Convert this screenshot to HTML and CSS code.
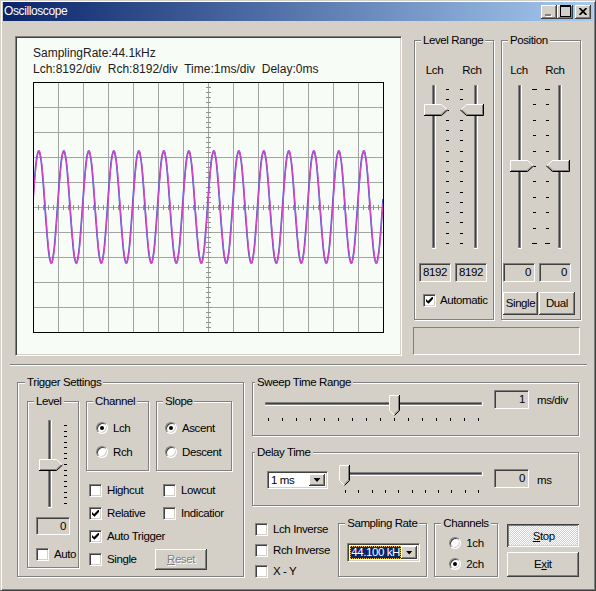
FILE: index.html
```html
<!DOCTYPE html>
<html>
  <head>
    <title>Oscilloscope</title>
    <link rel="stylesheet" href="styles.css">
  </head>
  <body>
    <svg class="defs" width="0" height="0">
      <defs>
        <g id="thumb-r">
          <polygon points="0,0 18,0 24,6 18,12 0,12" fill="#d4d0c8"/>
          <polyline points="0.5,12 0.5,0.5 17.5,0.5 23,5.5" stroke="#fff" fill="none"/>
          <polyline points="0,11.5 17.5,11.5 23.5,6" stroke="#000" fill="none"/>
          <polyline points="1,10.5 17,10.5 22,6" stroke="#808080" fill="none"/>
        </g>
        <g id="thumb-l">
          <polygon points="0,6 6,0 24,0 24,12 6,12" fill="#d4d0c8"/>
          <polyline points="0.5,6 6.5,0.5 23,0.5" stroke="#fff" fill="none"/>
          <polyline points="0.5,6 6.5,11.5 23.5,11.5 23.5,0" stroke="#000" fill="none"/>
          <polyline points="2,6 7,10.5 22.5,10.5 22.5,1" stroke="#808080" fill="none"/>
        </g>
        <g id="thumb-d">
          <polygon points="0,0 11,0 11,15 5.5,21 0,15" fill="#d4d0c8"/>
          <polyline points="5.5,20.5 0.5,15.5 0.5,0.5 10,0.5" stroke="#fff" fill="none"/>
          <polyline points="10.5,0 10.5,15.5 5.5,20.5" stroke="#000" fill="none"/>
          <polyline points="9.5,1 9.5,15 5.5,19" stroke="#808080" fill="none"/>
        </g>
        <pattern id="grid" width="25" height="25" patternUnits="userSpaceOnUse">
          <path d="M0 0.5H25M0.5 0V25" stroke="#a4a4a4" fill="none"/>
        </pattern>
        <pattern id="hticks" width="5" height="5" patternUnits="userSpaceOnUse">
          <rect width="5" height="1" fill="#909090"/>
        </pattern>
        <pattern id="vticks" width="5" height="5" patternUnits="userSpaceOnUse">
          <rect width="1" height="5" fill="#909090"/>
        </pattern>
        <clipPath id="plot-clip">
          <rect x="1" y="1" width="349" height="249"/>
        </clipPath>
      </defs>
    </svg>

    <div class="window">
      <div class="titlebar">
        <span class="title">Oscilloscope</span>
        <span class="tb-btn tb-min"></span>
        <span class="tb-btn tb-max"></span>
        <span class="tb-btn tb-close">
          <svg width="8" height="7" viewBox="0 0 8 7"><path d="M0.5 0L7.5 7M7.5 0L0.5 7" stroke="#000" stroke-width="1.7"/></svg>
        </span>
      </div>

      <div class="client">
        <div class="top">
          <div class="scope">
            <div class="scope-text">SamplingRate:44.1kHz</div>
            <div class="scope-text">Lch:8192/div&nbsp; Rch:8192/div&nbsp; Time:1ms/div&nbsp; Delay:0ms</div>
            <svg class="plot" width="351" height="251" viewBox="0 0 351 251">
              <rect x="0" y="0" width="351" height="251" fill="#f8fcf6"/>
              <rect x="0" y="0" width="351" height="251" fill="url(#grid)"/>
              <rect x="173" y="0" width="5" height="251" fill="url(#hticks)"/>
              <rect x="0" y="123" width="351" height="5" fill="url(#vticks)"/>
              <g clip-path="url(#plot-clip)">
                <polyline id="lch" fill="none" stroke="#4a56d6" stroke-width="1.6"/>
                <polyline id="rch" fill="none" stroke="#e044c4" stroke-width="1.2"/>
              </g>
              <rect x="0.5" y="0.5" width="350" height="250" fill="none" stroke="#000"/>
            </svg>
          </div>

          <div class="side">
            <div class="groups">
              <div class="group lr">
                <span class="legend">Level Range</span>
                <div class="ch-labels"><span>Lch</span><span>Rch</span></div>
                <svg class="vslider" width="78" height="170" viewBox="0 0 78 170">
                  <rect x="17" y="3" width="4" height="164" fill="#fff"/>
                  <rect x="17" y="3" width="3" height="163" fill="#808080"/>
                  <rect x="18" y="4" width="1" height="161" fill="#404040"/>
                  <rect x="59" y="3" width="4" height="164" fill="#fff"/>
                  <rect x="59" y="3" width="3" height="163" fill="#808080"/>
                  <rect x="60" y="4" width="1" height="161" fill="#404040"/>
                  <path class="tick" d="M31 7.5h3M31 17.5h3M31 28.5h3M31 38.5h3M31 48.5h3M31 58.5h3M31 69.5h3M31 79.5h3M31 89.5h3M31 99.5h3M31 110.5h3M31 120.5h3M31 130.5h3M31 140.5h3M31 151.5h3M31 161.5h3"/>
                  <path class="tick" d="M45 7.5h3M45 17.5h3M45 28.5h3M45 38.5h3M45 48.5h3M45 58.5h3M45 69.5h3M45 79.5h3M45 89.5h3M45 99.5h3M45 110.5h3M45 120.5h3M45 130.5h3M45 140.5h3M45 151.5h3M45 161.5h3"/>
                  <use href="#thumb-r" x="9" y="22"/>
                  <use href="#thumb-l" x="45" y="22"/>
                </svg>
                <div class="edits">
                  <span class="edit">8192</span>
                  <span class="edit">8192</span>
                </div>
                <div class="check lr-auto"><span class="box on"></span>Automatic</div>
              </div>

              <div class="group pos">
                <span class="legend">Position</span>
                <div class="ch-labels"><span>Lch</span><span>Rch</span></div>
                <svg class="vslider" width="78" height="170" viewBox="0 0 78 170">
                  <rect x="16" y="3" width="4" height="164" fill="#fff"/>
                  <rect x="16" y="3" width="3" height="163" fill="#808080"/>
                  <rect x="17" y="4" width="1" height="161" fill="#404040"/>
                  <rect x="56" y="3" width="4" height="164" fill="#fff"/>
                  <rect x="56" y="3" width="3" height="163" fill="#808080"/>
                  <rect x="57" y="4" width="1" height="161" fill="#404040"/>
                  <path class="tick" d="M30 7.5h5M31 22.5h3M31 38.5h3M31 53.5h3M31 69.5h3M31 84.5h3M31 99.5h3M31 115.5h3M31 130.5h3M31 146.5h3M30 161.5h5"/>
                  <path class="tick" d="M43 7.5h5M44 22.5h3M44 38.5h3M44 53.5h3M44 69.5h3M44 84.5h3M44 99.5h3M44 115.5h3M44 130.5h3M44 146.5h3M43 161.5h5"/>
                  <use href="#thumb-r" x="8" y="78"/>
                  <use href="#thumb-l" x="44" y="78"/>
                </svg>
                <div class="edits">
                  <span class="edit">0</span>
                  <span class="edit">0</span>
                </div>
                <div class="pos-btns">
                  <span class="btn btn-single">Single</span>
                  <span class="btn btn-dual">Dual</span>
                </div>
              </div>
            </div>
            <div class="status"></div>
          </div>
        </div>

        <div class="sep"></div>

        <div class="bottom">
          <div class="group trigger">
            <span class="legend legend-trig">Trigger Settings</span>

            <div class="group level-box">
              <span class="legend">Level</span>
              <svg class="vslider" width="50" height="100" viewBox="0 0 50 100">
                <rect x="20" y="8" width="4" height="88" fill="#fff"/>
                <rect x="20" y="8" width="3" height="87" fill="#808080"/>
                <rect x="21" y="9" width="1" height="85" fill="#404040"/>
                <path class="tick" d="M36 13.5h3M36 19.5h3M36 24.5h3M36 30.5h3M36 35.5h3M36 41.5h3M36 46.5h3M36 52.5h3M36 58.5h3M36 63.5h3M36 69.5h3M36 74.5h3M36 80.5h3M36 85.5h3M36 91.5h3"/>
                <use href="#thumb-r" x="11" y="47"/>
              </svg>
              <span class="edit level-edit">0</span>
              <div class="check level-auto"><span class="box"></span>Auto</div>
            </div>

            <div class="trig-main">
              <div class="trig-groups">
                <div class="group chan-box">
                  <span class="legend">Channel</span>
                  <div class="opts">
                    <div class="opt"><span class="radio on"></span>Lch</div>
                    <div class="opt"><span class="radio"></span>Rch</div>
                  </div>
                </div>
                <div class="group slope-box">
                  <span class="legend">Slope</span>
                  <div class="opts">
                    <div class="opt"><span class="radio on"></span>Ascent</div>
                    <div class="opt"><span class="radio"></span>Descent</div>
                  </div>
                </div>
              </div>

              <div class="trig-checks">
                <div class="row">
                  <div class="check col1"><span class="box"></span>Highcut</div>
                  <div class="check"><span class="box"></span>Lowcut</div>
                </div>
                <div class="row">
                  <div class="check col1"><span class="box on"></span>Relative</div>
                  <div class="check"><span class="box"></span>Indicatior</div>
                </div>
                <div class="row">
                  <div class="check"><span class="box on"></span>Auto Trigger</div>
                </div>
                <div class="row">
                  <div class="check col1 short"><span class="box"></span>Single</div>
                  <span class="btn btn-reset disabled"><u>R</u>eset</span>
                </div>
              </div>
            </div>
          </div>

          <div class="bright">
            <div class="group sweep">
              <span class="legend legend-near">Sweep Time Range</span>
              <svg class="hslider sweep-slider" width="224" height="32" viewBox="0 0 224 32">
                <rect x="3" y="10" width="218" height="4" fill="#fff"/>
                <rect x="3" y="10" width="217" height="3" fill="#808080"/>
                <rect x="4" y="11" width="215" height="1" fill="#404040"/>
                <path class="tick" d="M6.5 26v3M20.5 26v3M34.5 26v3M48.5 26v3M62.5 26v3M76.5 26v3M90.5 26v3M104.5 26v3M118.5 26v3M132.5 26v3M146.5 26v3M160.5 26v3M174.5 26v3M188.5 26v3M202.5 26v3M216.5 26v3"/>
                <use href="#thumb-d" x="127" y="3"/>
              </svg>
              <span class="edit sweep-edit">1</span>
              <span class="unit sweep-unit">ms/div</span>
            </div>

            <div class="group delay">
              <span class="legend legend-near">Delay Time</span>
              <div class="combo delay-combo">
                <span class="combo-text">1 ms</span>
                <span class="combo-btn"></span>
              </div>
              <svg class="hslider delay-slider" width="149" height="32" viewBox="0 0 149 32">
                <rect x="5" y="9" width="141" height="4" fill="#fff"/>
                <rect x="5" y="9" width="140" height="3" fill="#808080"/>
                <rect x="6" y="10" width="138" height="1" fill="#404040"/>
                <path class="tick" d="M8.5 27v3M21.5 27v3M35.5 27v3M48.5 27v3M61.5 27v3M75.5 27v3M88.5 27v3M101.5 27v3M114.5 27v3M128.5 27v3M141.5 27v3"/>
                <use href="#thumb-d" x="2" y="2"/>
              </svg>
              <span class="edit delay-edit">0</span>
              <span class="unit delay-unit">ms</span>
            </div>

            <div class="brow">
              <div class="checks">
                <div class="check"><span class="box"></span>Lch Inverse</div>
                <div class="check"><span class="box"></span>Rch Inverse</div>
                <div class="check"><span class="box"></span>X - Y</div>
              </div>

              <div class="group samp">
                <span class="legend">Sampling Rate</span>
                <div class="combo samp-combo">
                  <span class="combo-text sel">44.100 kH</span>
                  <span class="combo-btn"></span>
                </div>
              </div>

              <div class="group chans">
                <span class="legend">Channels</span>
                <div class="opts chans-opts">
                  <div class="opt"><span class="radio"></span>1ch</div>
                  <div class="opt"><span class="radio on"></span>2ch</div>
                </div>
              </div>

              <div class="btns">
                <span class="btn btn-stop pushed"><u>S</u>top</span>
                <span class="btn btn-exit">E<u>x</u>it</span>
              </div>
            </div>
          </div>
        </div>
      </div>
    </div>

    <script src="wave.js"></script>
  </body>
</html>
```

FILE: styles.css
```css
* {
  box-sizing: border-box;
}

body {
  margin: 0;
  font-family: "Liberation Sans", Arial, sans-serif;
  font-size: 11.5px;
  letter-spacing: -0.4px;
  line-height: 15px;
  color: #000;
  background: #d4d0c8;
}

.defs {
  position: absolute;
  width: 0;
  height: 0;
}

/* window frame */

.window {
  width: 596px;
  height: 591px;
  background: #d4d0c8;
  border: 1px solid;
  border-color: #d4d0c8 #404040 #404040 #d4d0c8;
  box-shadow: inset 1px 1px #fff, inset -1px -1px #808080;
  padding: 1px 2px 2px 2px;
}

.titlebar {
  height: 19px;
  display: flex;
  align-items: center;
  padding: 0 2px 0 1px;
  background: linear-gradient(to right, #0a246a, #a6caf0);
  color: #fff;
}

.title {
  flex: 1;
  font-size: 12px;
}

.tb-btn {
  width: 16px;
  height: 14px;
  display: flex;
  align-items: center;
  justify-content: center;
  background: #d4d0c8;
  box-shadow: inset -1px -1px #404040, inset 1px 1px #fff, inset -2px -2px #808080, inset 2px 2px #d4d0c8;
}

.tb-min::after {
  content: '';
  width: 6px;
  height: 2px;
  margin: 6px 2px 0 0;
  background: #808080;
  box-shadow: 1px 1px #fff;
}

.tb-max::after {
  content: '';
  width: 9px;
  height: 9px;
  margin-bottom: 1px;
  border: 1px solid #000;
  border-top-width: 2px;
}

.tb-close {
  margin-left: 2px;
}

.tb-close svg {
  margin-bottom: 1px;
}

/* shared win32 controls */

.group {
  position: relative;
  border: 1px solid #808080;
  box-shadow: inset 1px 1px #fff, 1px 1px #fff;
}

.legend {
  position: absolute;
  top: -8px;
  left: 6px;
  padding: 0 2px;
  background: #d4d0c8;
  white-space: nowrap;
}

.legend-near {
  left: 2px;
}

.legend-trig {
  left: 7px;
}

.edit {
  display: flex;
  align-items: center;
  justify-content: flex-end;
  height: 19px;
  padding-right: 3px;
  border: 1px solid;
  border-color: #808080 #fff #fff #808080;
  box-shadow: inset 1px 1px #404040, inset -1px -1px #d4d0c8;
  background: #d4d0c8;
}

.check {
  display: flex;
  align-items: center;
  gap: 5px;
  height: 13px;
  white-space: nowrap;
}

.box {
  width: 13px;
  height: 13px;
  flex-shrink: 0;
  background: #fff;
  border: 1px solid;
  border-color: #808080 #fff #fff #808080;
  box-shadow: inset 1px 1px #404040, inset -1px -1px #d4d0c8;
}

.box.on {
  background: #fff url("data:image/svg+xml,%3Csvg xmlns='http://www.w3.org/2000/svg' viewBox='0 0 11 11'%3E%3Cpolygon points='2,4 4,6 8,2 9,2 9,4 4.5,8.8 2,6.5'/%3E%3C/svg%3E") no-repeat 0 0;
  background-size: 11px 11px;
}

.opts {
  display: flex;
  flex-direction: column;
  gap: 12px;
  margin: 20px 0 0 9px;
}

.opt {
  display: flex;
  align-items: center;
  gap: 5px;
  height: 12px;
  white-space: nowrap;
}

.radio {
  position: relative;
  width: 12px;
  height: 12px;
  flex-shrink: 0;
  border-radius: 50%;
  background: #fff;
  border: 1px solid;
  border-color: #808080 #fff #fff #808080;
  box-shadow: inset 1px 1px #404040, inset -1px -1px #d4d0c8;
}

.radio.on::after {
  content: '';
  position: absolute;
  left: 3px;
  top: 3px;
  width: 4px;
  height: 4px;
  border-radius: 50%;
  background: #000;
}

.btn {
  display: flex;
  align-items: center;
  justify-content: center;
  height: 23px;
  background: #d4d0c8;
  box-shadow: inset -1px -1px #404040, inset 1px 1px #fff, inset -2px -2px #808080, inset 2px 2px #d4d0c8;
  white-space: nowrap;
}

.btn.pushed {
  padding: 2px 0 0 2px;
  background: repeating-conic-gradient(#fff 0 25%, #d4d0c8 0 50%) 0 0 / 2px 2px;
  box-shadow: inset 1px 1px #404040, inset -1px -1px #fff, inset 2px 2px #808080, inset -2px -2px #d4d0c8;
}

.btn.disabled {
  color: #808080;
  text-shadow: 1px 1px #fff;
}

.combo {
  display: flex;
  height: 18px;
  padding: 2px;
  background: #fff;
  border: 1px solid;
  border-color: #808080 #fff #fff #808080;
  box-shadow: inset 1px 1px #404040, inset -1px -1px #d4d0c8;
}

.combo-text {
  flex: 1;
  padding-left: 1px;
  line-height: 12px;
  overflow: hidden;
  white-space: nowrap;
}

.combo-text.sel {
  line-height: 13px;
  background: #0a246a;
  color: #fff;
  outline: 1px dotted #f0c040;
  outline-offset: -1px;
}

.combo-btn {
  width: 16px;
  flex-shrink: 0;
  display: flex;
  align-items: center;
  justify-content: center;
  background: #d4d0c8;
  box-shadow: inset -1px -1px #404040, inset 1px 1px #fff, inset -2px -2px #808080, inset 2px 2px #d4d0c8;
}

.combo-btn::after {
  content: '';
  width: 7px;
  height: 4px;
  background: #000;
  clip-path: polygon(0 0, 100% 0, 50% 100%);
}

.tick {
  stroke: #000;
  fill: none;
  shape-rendering: crispEdges;
}

.vslider,
.hslider {
  display: block;
  flex-shrink: 0;
}

/* layout */

.client {
  padding: 15px 0 0 12px;
}

.top {
  display: flex;
  height: 320px;
}

.scope {
  width: 387px;
  height: 320px;
  padding: 8px 0 0 17px;
  background: #f8fcf6;
  border: 1px solid;
  border-color: #808080 #fff #fff #808080;
  box-shadow: inset 1px 1px #404040, inset -1px -1px #d4d0c8;
}

.scope-text {
  font-size: 12px;
  letter-spacing: 0;
  line-height: 16px;
  color: #202020;
  white-space: nowrap;
}

.plot {
  display: block;
  margin-top: 5px;
}

.side {
  margin-left: 11px;
  width: 167px;
}

.groups {
  display: flex;
  padding-top: 4px;
}

.lr,
.pos {
  display: flex;
  flex-direction: column;
  width: 80px;
  height: 280px;
}

.lr {
  margin-left: 1px;
}

.pos {
  margin-left: 7px;
}

.ch-labels {
  display: flex;
  margin-top: 22px;
}

.ch-labels span {
  text-align: center;
}

.lr .ch-labels span:first-child {
  width: 39px;
}

.lr .ch-labels span:last-child {
  width: 36px;
}

.pos .ch-labels span:first-child {
  width: 34px;
}

.pos .ch-labels span:last-child {
  width: 38px;
}

.lr .vslider,
.pos .vslider {
  margin-top: 4px;
}

.edits {
  display: flex;
  gap: 4px;
  margin-top: 11px;
}

.edits .edit {
  width: 32px;
}

.lr .edits {
  margin-left: 4px;
}

.pos .edits {
  margin-left: 1px;
}

.lr-auto {
  margin: 12px 0 0 8px;
  gap: 4px;
}

.pos-btns {
  display: flex;
  gap: 1px;
  margin: 10px 0 0 1px;
}

.btn-single {
  width: 35px;
}

.btn-dual {
  width: 36px;
}

.status {
  margin-top: 7px;
  width: 167px;
  height: 28px;
  border: 1px solid;
  border-color: #808080 #fff #fff #808080;
}

.sep {
  margin: 8px 0 0 -5px;
  width: 577px;
  height: 2px;
  border-top: 1px solid #808080;
  border-bottom: 1px solid #fff;
}

.bottom {
  display: flex;
  margin-top: 16px;
}

.trigger {
  display: flex;
  align-items: flex-start;
  margin-left: 2px;
  width: 227px;
  height: 195px;
}

.level-box {
  display: flex;
  flex-direction: column;
  margin: 18px 0 0 9px;
  width: 52px;
  height: 167px;
}

.level-box .vslider {
  margin-top: 10px;
}

.level-edit {
  width: 34px;
  height: 18px;
  margin: 5px 0 0 8px;
}

.level-auto {
  margin: 13px 0 0 8px;
}

.trig-main {
  margin: 18px 0 0 7px;
}

.trig-groups {
  display: flex;
  gap: 7px;
}

.chan-box {
  width: 63px;
  height: 70px;
}

.slope-box {
  width: 76px;
  height: 70px;
}

.slope-box .opts {
  margin-left: 8px;
}

.trig-checks {
  display: flex;
  flex-direction: column;
  gap: 10px;
  margin: 13px 0 0 3px;
}

.row {
  display: flex;
  align-items: center;
  height: 13px;
}

.row .col1 {
  width: 74px;
}

.row .short {
  width: 66px;
}

.btn-reset {
  width: 52px;
  height: 21px;
  flex-shrink: 0;
}

.bright {
  margin-left: 8px;
  width: 327px;
}

.sweep,
.delay {
  display: flex;
  align-items: flex-start;
  height: 54px;
}

.sweep-slider {
  margin: 9px 0 0 9px;
}

.sweep-edit,
.delay-edit {
  width: 35px;
  margin-left: 8px;
}

.sweep-edit {
  margin-top: 7px;
}

.unit {
  margin-left: 8px;
}

.sweep-unit {
  margin-top: 10px;
}

.delay {
  margin-top: 16px;
}

.delay-combo {
  width: 61px;
  margin: 18px 0 0 14px;
}

.delay-slider {
  margin: 10px 0 0 9px;
}

.delay-edit {
  margin-top: 16px;
}

.delay-unit {
  margin-top: 20px;
}

.brow {
  display: flex;
  align-items: flex-start;
  margin-top: 17px;
}

.checks {
  display: flex;
  flex-direction: column;
  gap: 8px;
  margin-left: 3px;
  width: 84px;
}

.samp {
  width: 90px;
  height: 54px;
}

.samp-combo {
  width: 73px;
  height: 19px;
  margin: 19px 0 0 8px;
}

.chans {
  margin-left: 7px;
  width: 64px;
  height: 54px;
}

.chans-opts {
  gap: 9px;
  margin: 13px 0 0 14px;
}

.btns {
  display: flex;
  flex-direction: column;
  gap: 5px;
  margin: 1px 0 0 9px;
  width: 73px;
}

.btn-exit {
  height: 25px;
}
```

FILE: wave.js
```js
// draw the two channel traces: 1 kHz sine, 1 ms per 25px division
function drawTrace(id, shift) {
  var pts = [];
  for (var i = 0; i <= 700; i++) {
    var x = i / 2;
    var y = 125 - 56 * Math.cos(2 * Math.PI * (x - 6 + shift) / 25);
    pts.push(x.toFixed(1) + ',' + Math.round(y));
  }
  document.getElementById(id).setAttribute('points', pts.join(' '));
}

drawTrace('lch', 0.3);
drawTrace('rch', 0);
```
